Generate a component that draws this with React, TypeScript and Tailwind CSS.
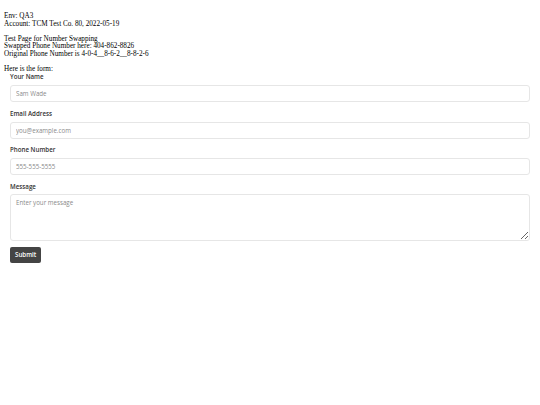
export default function App() {
	const fields = [
		{ label: 'Your Name', placeholder: 'Sam Wade' },
		{ label: 'Email Address', placeholder: 'you@example.com' },
		{ label: 'Phone Number', placeholder: '555-555-5555' }
	];

	return (
		<div className="min-h-screen bg-white px-[4px] pt-[5.5px] font-['Liberation_Serif',serif] text-[7.2px] leading-[7.5px] text-black">
			<p className="mt-[7.5px] mb-[7.5px]">
				Env: QA3
				<br />
				Account: TCM Test Co. 80, 2022-05-19
			</p>
			<p className="my-[7.5px]">
				Test Page for Number Swapping
				<br />
				Swapped Phone Number here: 404-862-8826
				<br />
				Original Phone Number is 4-0-4__8-6-2__8-8-2-6
			</p>
			<p className="mt-[7.5px]">Here is the form:</p>
			<form
				className="px-[6px] pt-0 font-['Open_Sans',sans-serif]"
				onSubmit={(e) => e.preventDefault()}>
				{fields.map((f) => (
					<div key={f.label} className="mb-[7.5px]">
						<label className="block text-[6.2px] leading-[8px] font-semibold text-[#333] mb-[4px]">
							{f.label}
						</label>
						<input
							type="text"
							placeholder={f.placeholder}
							className="block w-full h-[17px] rounded-[3px] border border-[#e6e6e6] bg-white px-[5px] text-[6.2px] text-[#555] outline-none placeholder:text-[#8a8a8a]"
						/>
					</div>
				))}
				<div className="mb-[6.5px]">
					<label className="block text-[6.2px] leading-[8px] font-semibold text-[#333] mb-[3px]">
						Message
					</label>
					<textarea
						placeholder="Enter your message"
						className="block w-full h-[47px] rounded-[3px] border border-[#e6e6e6] bg-white px-[5px] py-[4px] text-[6.2px] text-[#555] outline-none placeholder:text-[#8a8a8a]"
					/>
				</div>
				<button
					type="submit"
					className="h-[16px] rounded-[2px] bg-[#444] px-[5px] text-[6.2px] font-semibold text-white">
					Submit
				</button>
			</form>
		</div>
	);
}
